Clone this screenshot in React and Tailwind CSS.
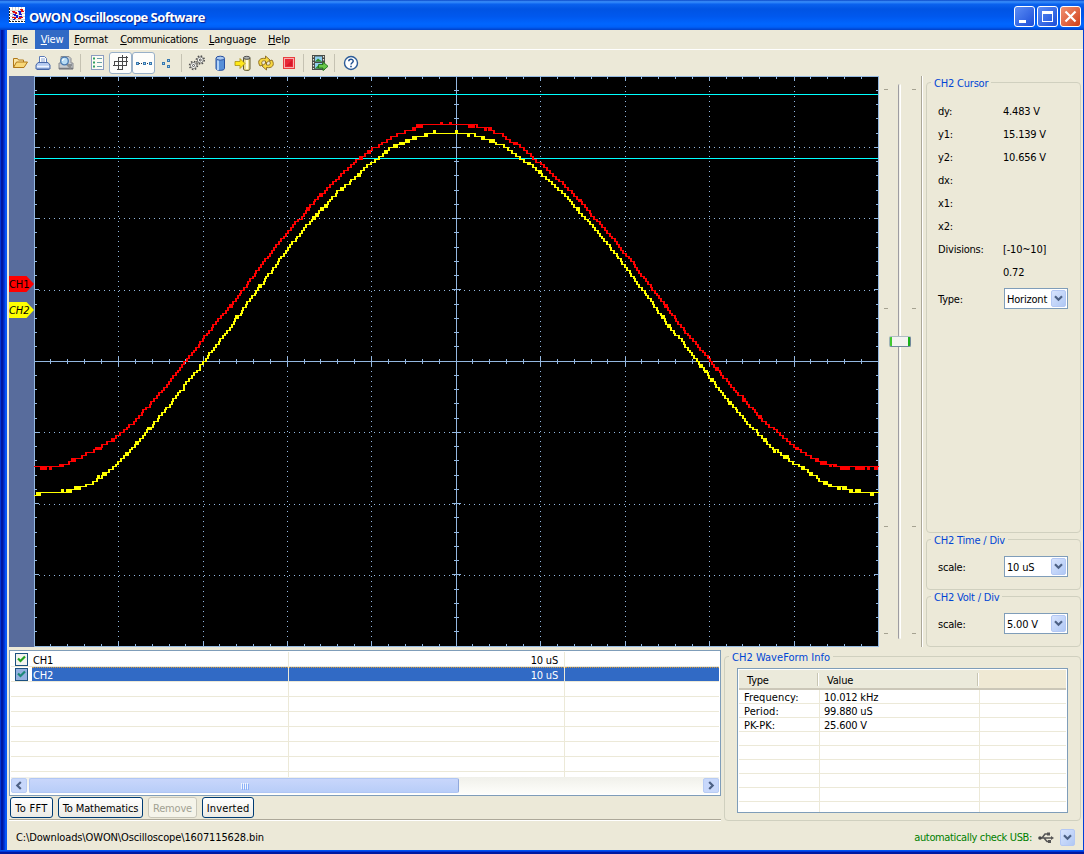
import React, { useState } from "react";
import clsx from "clsx";

const X0 = 34;
const Y0 = 76;
const STEP = 2.85; // one ADC level on screen
const COLS = [118, 203, 287, 371, 456, 540, 625, 709, 794];
const ROWS = [147, 218, 290, 361, 432, 504, 575];

const CH1 = [
  [34, 467.5], [50, 467.5], [56, 466], [66, 463], [78, 457], [90, 452], [100, 446], [110, 440],
  [118, 434], [135, 419], [155, 397], [186, 359], [203, 337], [235, 298], [262, 262], [287, 231],
  [310, 205], [330, 184], [355, 160], [371, 149], [380, 143], [390, 137], [405, 131], [418, 126],
  [440, 124], [460, 124], [475, 126], [490, 130], [503, 136], [521, 147], [533, 158], [545, 168],
  [560, 182], [570, 191], [600, 225], [625, 254], [660, 300], [676, 321], [709, 361], [720, 374],
  [743, 400], [760, 418], [777, 432], [794, 447], [806, 455], [818, 461], [835, 465.5], [842, 467.5],
  [878, 467.5],
];

const CH2 = [
  [34, 493], [50, 493], [66, 491], [78, 487], [90, 482.5], [100, 476], [110, 469], [118, 462],
  [128, 451], [138, 440], [170, 402], [203, 361], [230, 325], [260, 284], [287, 248], [310, 220],
  [340, 189], [371, 162], [378, 157], [392, 146], [403, 142], [418, 136], [430, 133], [445, 132.5],
  [460, 133], [475, 135], [490, 140], [503, 147], [521, 158], [533, 167], [543, 176], [555, 187],
  [566, 197], [600, 236], [625, 267], [649, 300], [667, 325], [697, 361], [709, 377], [718, 389],
  [727, 400], [748, 425], [760, 436], [773, 449], [794, 463], [808, 472], [820, 480], [831, 486],
  [850, 490], [860, 492], [878, 493],
];

// stepped trace, noise makes it flip between neighbouring levels
function tracePath(points, seed, spread) {
  let s = seed;
  const rand = () => {
    s = (s * 16807) % 2147483647;
    return s / 2147483647;
  };
  let i = 0;
  let d = "";
  let prev = null;
  for (let x = 34; x <= 877; x++) {
    while (i < points.length - 2 && x > points[i + 1][0]) i++;
    const [ax, ay] = points[i];
    const [bx, by] = points[i + 1];
    const y = ay + ((by - ay) * (x - ax)) / (bx - ax);
    const noise = (rand() + rand() - 1) * spread;
    const level = Math.round(Math.round((y - Y0) / STEP + noise) * STEP);
    d += prev === null ? `M${x - X0} ${level + 0.5}` : `H${x - X0 + 0.5}V${level + 0.5}`;
    prev = level;
  }
  return d + "h1";
}

function gridPath() {
  let d = "";
  for (let k = 1; k < 50; k++) {
    const x = k % 5 === 0 ? COLS[k / 5 - 1] - X0 : Math.floor(16.88 * k);
    const n = k % 5 === 0 ? 5 : 3;
    const c = k % 5 === 0 ? 5 : 2;
    d += `M${x} 0h1v${n}h-1zM${x} ${571 - n}h1v${n}h-1zM${x} ${285 - c}h1v${c * 2 + 1}h-1z`;
  }
  for (let k = 1; k < 40; k++) {
    const y = Math.floor(14.25 * k);
    const n = k % 5 === 0 ? 5 : 3;
    const c = k % 5 === 0 ? 4 : 2;
    d += `M0 ${y}h${n}v1h-${n}zM${845 - n} ${y}h${n}v1h-${n}zM${422 - c} ${y}h${c * 2 + 1}v1h-${c * 2 + 1}z`;
  }
  COLS.forEach((x) => {
    for (let y = 10; y < 568; y += 5) d += `M${x - X0} ${y}h1v1h-1z`;
  });
  ROWS.forEach((y) => {
    for (let x = 5; x < 842; x += 5) d += `M${x} ${y - Y0}h1v1h-1z`;
  });
  return d;
}

function Trace({ points, seed, spread, color }) {
  const d = tracePath(points, seed, spread);
  return (
    <g fill="none" stroke={color}>
      <path d={d} />
      <path d={d} transform="translate(1 0)" />
    </g>
  );
}

function Scope() {
  return (
    <svg className="block shrink-0" width="845" height="571" shapeRendering="crispEdges">
      <rect width="845" height="571" fill="#000" />
      <path d={gridPath()} fill="#94b8e0" />
      <path d="M0.5 0V571M844.5 0V571M0 0.5H845M0 570.5H845M422.5 0V571M0 285.5H845" stroke="#94b8e0" />
      <path d="M0 18.5H844M0 82.5H844" stroke="#00ffff" />
      <Trace points={CH1} seed={7717} spread={0.58} color="#ff0000" />
      <Trace points={CH2} seed={91234} spread={0.72} color="#ffff00" />
    </svg>
  );
}

function AppIcon() {
  return (
    <svg width="16" height="16" shapeRendering="crispEdges">
      <rect width="16" height="16" fill="#fff" />
      <path d="M3.5 0v14M6.5 0v14M9.5 0v14M12.5 0v14M1 3.5h15M1 6.5h15M1 9.5h15M1 12.5h15" stroke="#d4d4d4" />
      <path d="M.5 1v15M0 14.5h16" fill="none" stroke="#222" strokeDasharray="2 1" />
      <path d="M3 4.500h2v1h2v1M11 2.500h2v2h2M3 10.500h3v1M9 11.500h2v-1h3" fill="none" stroke="#e01010" strokeWidth="1.500" />
      <path d="M4 7.500h2v1h2v2M9 4.500h2v3h2M4 12.500h2M10 9.500h3" fill="none" stroke="#1818d0" strokeWidth="1.500" />
    </svg>
  );
}

const icons = {
  open: (
    <>
      <path d="M1.5 12.5v-9h4l1 1.5h5v2" fill="#fbe6a4" stroke="#b07818" />
      <path d="M1.5 12.5L4.5 7h11l-3.5 5.5z" fill="#f8d878" stroke="#b07818" />
    </>
  ),
  print: (
    <>
      <path d="M4.5 7V1.5h5l2 2V7" fill="#fff" stroke="#5b7bb8" />
      <path d="M6 4h4M6 6h4" stroke="#8aa4d0" />
      <path d="M3 7.5h10l2 2.5v4H1v-4z" fill="#b4caf0" stroke="#4868a8" />
      <path d="M2 11.5h12" stroke="#eef4ff" strokeWidth="1.5" />
      <path d="M2 14.5h12" stroke="#4868a8" />
    </>
  ),
  preview: (
    <>
      <path d="M3 1.5h8l2 2V8h2v6H1V8h2z" fill="#c8ccd0" stroke="#8a8c90" />
      <path d="M1 13.5h14M10 10h4" stroke="#77797d" strokeWidth="1.5" />
      <path d="M8 8l5 5" stroke="#909090" strokeWidth="2.5" />
      <circle cx="6.5" cy="6" r="3.8" fill="#b8dcf4" stroke="#4878b0" strokeWidth="1.3" />
      <path d="M4.5 6a2 2 0 012-2" fill="none" stroke="#fff" strokeWidth="1.2" />
    </>
  ),
  list: (
    <>
      <rect x="1.500" y=".5" width="12" height="14" fill="#fcfcf4" stroke="#8c9cc0" />
      <path d="M3 2.500h2v2h-2zM3 6.500h2v2h-2zM3 10.500h2v2h-2z" fill="#30a060" />
      <path d="M7 3.500h5M7 7.500h5M7 11.500h5" stroke="#68a0a8" />
    </>
  ),
  grid: (
    <path
      d="M5.500 2v13M9.500 0v15M13.500 1v10M1.500 6v5M5 2.500h10M1 6.500h14M0 10.500h14M4 14.500h6"
      fill="none"
      stroke="#484848"
      shapeRendering="crispEdges"
    />
  ),
  dots: (
    <g shapeRendering="crispEdges">
      <path d="M1 8.500h15" stroke="#303840" strokeDasharray="1 1" />
      <path d="M0 7h3v3H0zM7 7h3v3H7zM13 7h3v3h-3z" fill="#3878b0" />
      <path d="M1 8h1v1H1zM8 8h1v1H8zM14 8h1v1h-1z" fill="#a0d4f0" />
    </g>
  ),
  points: (
    <g shapeRendering="crispEdges">
      <path d="M3 7h3v3H3zM8 4h3v3H8zM8 10h3v3H8z" fill="#3878b0" />
      <path d="M4 8h1v1H4zM9 5h1v1H9zM9 11h1v1H9z" fill="#a0d4f0" />
    </g>
  ),
  gears: (
    <>
      <circle cx="4.500" cy="10.500" r="3.900" fill="none" stroke="#505050" strokeWidth="1.600" strokeDasharray="1.500 1.560" />
      <circle cx="4.500" cy="10.500" r="3" fill="#f8f8f4" stroke="#606060" strokeWidth=".8" />
      <circle cx="4.500" cy="10.500" r="1" fill="#fff" stroke="#505050" />
      <circle cx="11.300" cy="5" r="3.900" fill="none" stroke="#505050" strokeWidth="1.600" strokeDasharray="1.500 1.560" />
      <circle cx="11.300" cy="5" r="3" fill="#f8f8f4" stroke="#606060" strokeWidth=".8" />
      <circle cx="11.300" cy="5" r="1" fill="#fff" stroke="#505050" />
    </>
  ),
  cylinder: (
    <>
      <path d="M4 3.500v10c0 2.500 8.500 2.500 8.500 0v-10z" fill="#5890d8" stroke="#2850a0" />
      <path d="M6 5v10" stroke="#b4d4f8" strokeWidth="2" />
      <ellipse cx="8.250" cy="3.200" rx="4.250" ry="2" fill="#a8c8f0" stroke="#2850a0" />
    </>
  ),
  load: (
    <>
      <path d="M8.500 3v11c0 2 6.500 2 6.500 0V3z" fill="#e8dc90" stroke="#605830" />
      <path d="M12 5v9" stroke="#fffbe0" strokeWidth="2" />
      <ellipse cx="11.750" cy="2.800" rx="3.250" ry="1.500" fill="#b0b4b0" stroke="#505050" />
      <path d="M0 6.500h5V3.500l5 5-5 5v-3H0z" fill="#ffe818" stroke="#a89010" strokeWidth=".8" />
    </>
  ),
  refresh: (
    <>
      <path d="M2 11C-1.500 5.500 2.500 2.500 7.500 3.500V1L12 5 7.500 8.500V6C4 5.300 2.800 7 4.500 10z" fill="#f8d840" stroke="#8a6818" strokeWidth=".9" />
      <path d="M14 5C17.500 10.500 13.500 13.500 8.500 12.500V15L4 11l4.500-3.500V10c3.500.7 4.700-1 3-4z" fill="#f8d840" stroke="#8a6818" strokeWidth=".9" />
    </>
  ),
  stop: (
    <>
      <rect x="2.500" y="2.500" width="11" height="11" fill="#f8b0b0" stroke="#e84040" />
      <rect x="4" y="4" width="8" height="8" fill="#e82838" />
      <path d="M5 11L11 5v6z" fill="#d81828" />
    </>
  ),
  film: (
    <>
      <rect x="0" y="0" width="13" height="15" fill="#484c48" />
      <path d="M1.500 1v13M11.500 1v13" stroke="#e8e8e0" strokeWidth="1.200" strokeDasharray="1.500 1.500" />
      <path d="M3 1.500h7v5H3z" fill="#90d0f0" />
      <path d="M3 8h7v5.500H3z" fill="#90d0f0" />
      <path d="M3 6.500l3-3 4 3zM3 13.500l3-3 4 3z" fill="#309030" />
      <path d="M6.500 9.500H11v-2.500l5 4.300-5 4.300V13H6.500z" fill="#68c848" stroke="#207018" strokeWidth=".9" />
    </>
  ),
  help: (
    <>
      <circle cx="8" cy="8" r="6.500" fill="#fff" stroke="#2c5c98" strokeWidth="1.400" />
      <path d="M5.800 6.300C5.800 3.600 10.300 3.700 10.200 6.200 10.100 7.700 8 7.800 8 9.600" fill="none" stroke="#205090" strokeWidth="1.500" />
      <path d="M7.200 10.800h1.600v1.500H7.200z" fill="#205090" />
    </>
  ),
};

function Tool({ name, active }) {
  return (
    <button
      className={clsx(
        "flex h-[22px] w-[23px] shrink-0 items-center justify-center",
        active && "rounded-[3px] border border-[#98b0c8] bg-[#fdfdfb]"
      )}
    >
      <svg width="16" height="16" viewBox="0 0 16 16" className="shrink-0 overflow-visible">
        {icons[name]}
      </svg>
    </button>
  );
}

function Divider({ className }) {
  return <div className={clsx("h-[18px] w-px shrink-0 bg-[#c5c2b2]", className)} />;
}

function Chevron({ className }) {
  return (
    <svg width="9" height="7" viewBox="0 0 9 7" className={className}>
      <path d="M1 1.200L4.500 4.700 8 1.200" fill="none" stroke="#4d6185" strokeWidth="2.200" />
    </svg>
  );
}

function DropButton({ className }) {
  return (
    <span
      className={clsx(
        "flex h-[17px] w-[15px] items-center justify-center rounded-[2px] border border-[#b4c8f4] bg-linear-to-br from-[#d8e4fe] to-[#b0c8f4]",
        className
      )}
    >
      <Chevron />
    </span>
  );
}

function Combo({ value }) {
  return (
    <div className="mb-[2px] ml-px flex h-[21px] w-[64px] items-center justify-between border border-[#7f9db9] bg-white pr-px pl-[2px]">
      <span className="pt-px">{value}</span>
      <DropButton />
    </div>
  );
}

function Group({ title, className, titleClass, children }) {
  return (
    <section className={clsx("rounded-[4px] border border-[#d0d0bf]", className)}>
      <h2 className={clsx("-mt-[6px] ml-[4px] w-fit bg-[#ece9d8] px-[3px] text-[#0046d5]", titleClass)}>{title}</h2>
      {children}
    </section>
  );
}

function Marker({ label, className }) {
  return (
    <div
      className={clsx(
        "flex h-4 w-[25px] items-center text-[11px] tracking-[-0.1px] [clip-path:polygon(0_0,70%_0,100%_50%,70%_100%,0_100%)]",
        className
      )}
    >
      {label}
    </div>
  );
}

function Slider() {
  return (
    <div className="flex h-[571px] w-[44px] shrink-0 justify-between border-r border-white">
      <div className="relative flex w-[42px] justify-center pt-2">
        <div className="ml-[-1px] h-[555px] w-[3px] rounded-full border-r border-l border-r-white border-l-[#9d9ca1] bg-[#f2f1ea]" />
        {[13, 232, 450, 557].map((y) => (
          <div key={y} className="absolute left-[5px] flex w-[32px] justify-between" style={{ top: y }}>
            <span className="h-px w-[4px] bg-[#a5a291]" />
            <span className="h-px w-[4px] bg-[#a5a291]" />
          </div>
        ))}
        <div className="absolute top-[260px] left-[10px] h-[11px] w-[22px] rounded-[2px] border border-t-[#b0bcc4] border-r-[#70889c] border-b-[#70889c] border-l-[#a0b4b8] bg-linear-to-r from-[#40c830] from-10% via-[#f3f3ef] via-10% to-[#f3f3ef] to-88%">
          <div className="ml-auto h-full w-[2px] bg-[#18b018]" />
        </div>
      </div>
      <div className="w-px bg-[#aca899]" />
    </div>
  );
}

function Check({ on, selected }) {
  return (
    <span
      className={clsx(
        "flex size-[13px] items-center justify-center border",
        selected ? "border-[#1c5180] bg-[#94b0e0]" : "border-[#1c5180] bg-[#f3f3ef]"
      )}
    >
      {on && (
        <svg width="9" height="9" viewBox="0 0 9 9">
          <path d="M1 3.500L3.500 6 8 1.500" fill="none" stroke={selected ? "#1c8878" : "#21a121"} strokeWidth="2.200" />
        </svg>
      )}
    </span>
  );
}

function ChannelTable() {
  const [selected, setSelected] = useState("CH2");
  const rows = [
    { name: "CH1", scale: "10 uS" },
    { name: "CH2", scale: "10 uS" },
    ...Array(6).fill({}),
  ];
  return (
    <div className="h-[146px] w-[712px] border border-[#7f9db9] bg-white px-px pt-px">
      <div className="h-[125px] overflow-hidden">
        {rows.map((row, i) => {
          const active = row.name && row.name === selected;
          const cell = active
            ? "border-t border-dotted border-[#d09840] bg-[#316ac5] leading-[16px]"
            : "leading-[18px]";
          return (
            <div
              key={i}
              onClick={() => row.name && setSelected(row.name)}
              className={clsx("flex h-[15px] border-b border-[#ece9d8]", active && "text-white")}
            >
              <div className="flex w-[21px] items-center pl-1">
                {row.name && <Check on selected={active} />}
              </div>
              <div className={clsx("flex h-[14px] w-[256px] pl-px", cell)}>{row.name}</div>
              <div className="w-px bg-[#ece9d8]" />
              <div className={clsx("flex h-[14px] w-[275px] justify-end pr-[6px]", cell)}>{row.scale}</div>
              <div className="w-px bg-[#ece9d8]" />
              <div className={clsx("h-[14px] flex-1", cell)} />
            </div>
          );
        })}
        <div className="flex h-[5px]">
          <div className="ml-[277px] w-px bg-[#ece9d8]" />
          <div className="ml-[275px] w-px bg-[#ece9d8]" />
        </div>
      </div>
      <div className="flex h-[17px] items-center justify-between bg-linear-to-b from-[#f0f0ea] to-[#fefefb]">
        <div className="flex items-center gap-[2px]">
          <span className="flex h-[15px] w-[16px] items-center justify-center rounded-[2px] border border-[#b8ccf4] bg-[#c8d8fb] pr-[2px]">
            <Chevron className="shrink-0 rotate-90" />
          </span>
          <div className="flex h-[15px] w-[430px] items-center justify-center gap-px rounded-[2px] border border-[#b0c6f4] border-r-[#90a8dc] bg-linear-to-b from-[#c8d6fb] to-[#b8cdf8]">
            {[0, 1, 2, 3].map((n) => (
              <span key={n} className="h-[6px] w-px bg-[#eef4fe] shadow-[1px_1px_0_#8cb0f8]" />
            ))}
          </div>
        </div>
        <span className="flex h-[15px] w-[16px] items-center justify-center rounded-[2px] border border-[#b8ccf4] bg-[#c8d8fb]">
          <Chevron className="-rotate-90" />
        </span>
      </div>
    </div>
  );
}

function XpButton({ className, disabled, children }) {
  return (
    <button
      disabled={disabled}
      className={clsx(
        "h-[21px] rounded-[3px] border pt-px text-center whitespace-nowrap",
        disabled
          ? "border-[#c9c7ba] bg-[#f5f4ea] text-[#a1a192]"
          : "border-[#003c74] bg-linear-to-b from-white to-[#ecebe5]",
        className
      )}
    >
      {children}
    </button>
  );
}

function WaveInfo() {
  const rows = [
    ["Frequency:", "10.012 kHz"],
    ["Period:", "99.880 uS"],
    ["PK-PK:", "25.600 V"],
    ...Array(6).fill(["", ""]),
  ];
  return (
    <div className="mt-[4px] ml-[12px] h-[145px] w-[331px] overflow-hidden border border-[#7f9db9] bg-white p-px">
      <div className="flex h-[20px] items-center border-b-2 border-[#cbc7b8] bg-[#ebeadb]">
        <div className="w-[78px] pt-[3px] pl-[8px]">Type</div>
        <div className="h-[13px] w-[2px] border-l border-[#c7c5b2] bg-white" />
        <div className="w-[158px] pt-[3px] pl-[8px]">Value</div>
        <div className="h-[13px] w-[2px] border-l border-[#c7c5b2] bg-white" />
        <div className="h-full flex-1 bg-[#efe9d4]" />
      </div>
      {rows.map(([type, value], i) => (
        <div key={i} className="flex h-[14px] items-center border-b border-[#ece9d8] leading-[15px]">
          <div className="h-full w-[80px] pl-[5px] tracking-[0.1px]">{type}</div>
          <div className="h-full w-px bg-[#ece9d8]" />
          <div className="h-full w-[159px] pl-[4px]">{value}</div>
          <div className="h-full w-px bg-[#ece9d8]" />
        </div>
      ))}
    </div>
  );
}

function TitleBar() {
  const btn = "flex size-[21px] items-center justify-center rounded-[3px] border border-white";
  return (
    <header className="flex h-[30px] shrink-0 items-center bg-[linear-gradient(180deg,#0a48c8_0,#3a90fc_6%,#0a62ee_14%,#0054e3_30%,#0058ee_55%,#0066ff_80%,#0060f8_90%,#0040c8_100%)] pt-[3px] pr-[3px] pl-[9px]">
      <div className="-mt-[3px]">
        <AppIcon />
      </div>
      <h1 className="ml-[4px] flex-1 pt-[2px] font-['Open_Sans','Noto_Sans',sans-serif] text-[13px] font-bold tracking-[-0.53px] text-white [font-stretch:normal] [text-shadow:1px_1px_1px_#0a1883]">
        OWON Oscilloscope Software
      </h1>
      <div className="flex gap-[2px]">
        <button className={clsx(btn, "bg-linear-to-br from-[#5c8cf4] to-[#1c4cd8]")}>
          <span className="mt-[9px] mr-[4px] h-[3px] w-[7px] bg-white" />
        </button>
        <button className={clsx(btn, "bg-linear-to-br from-[#5c8cf4] to-[#1c4cd8]")}>
          <span className="h-[11px] w-[11px] border border-t-[3px] border-white" />
        </button>
        <button className={clsx(btn, "bg-linear-to-br from-[#f09070] to-[#d03c10]")}>
          <svg width="13" height="13">
            <path d="M1.500 1.500L11.500 11.500M11.500 1.500L1.500 11.500" stroke="#fff" strokeWidth="2.200" />
          </svg>
        </button>
      </div>
    </header>
  );
}

const menu = [
  ["File", "w-[28px] pr-[2px]"],
  ["View", "w-[34px] bg-[#316ac5] text-white"],
  ["Format", "w-[46px] pr-[2px]"],
  ["Communications", "w-[88px] tracking-[-0.4px]"],
  ["Language", "w-[60px] pr-px"],
  ["Help", "w-[33px] pr-px"],
];

function CursorRow({ label, value }) {
  return (
    <div className="flex h-[23px] items-center">
      <span className="w-[65px]">{label}</span>
      <span>{value}</span>
    </div>
  );
}

export default function App() {
  return (
    <div className="flex h-[854px] w-[1084px] flex-col overflow-hidden bg-[#ece9d8] font-['DejaVu_Sans_Condensed','DejaVu_Sans',sans-serif] text-[11px] leading-[13px] tracking-[-0.2px] text-black [font-stretch:condensed]">
      <TitleBar />
      <div className="flex h-[820px] shrink-0">
        <div className="w-[7px] shrink-0 bg-[linear-gradient(90deg,#0036d8_0_1px,#0018a0_1px_3px,#0028c0_3px_4px,#0038dc_4px_5px,#0858f4_5px_7px)]" />
        <main className="flex w-[1076px] shrink-0 flex-col">
          <nav className="flex h-[20px] border-b border-white">
            {menu.map(([name, cls]) => (
              <button key={name} className={clsx("h-[19px] text-center whitespace-nowrap", cls)}>
                <span className="underline underline-offset-1">{name[0]}</span>
                {name.slice(1)}
              </button>
            ))}
          </nav>

          <div className="flex h-[26px] items-center pl-px">
            <Tool name="open" />
            <Tool name="print" />
            <Tool name="preview" />
            <Divider className="mr-[5px] ml-[3px]" />
            <Tool name="list" />
            <Tool name="grid" active />
            <Tool name="dots" active />
            <Tool name="points" />
            <Divider className="mr-[3px] ml-[3px]" />
            <Tool name="gears" />
            <Tool name="cylinder" />
            <Tool name="load" />
            <Tool name="refresh" />
            <Tool name="stop" />
            <Divider className="mr-[4px] ml-[3px]" />
            <Tool name="film" />
            <Divider className="mr-[4px] ml-[3px]" />
            <Tool name="help" />
          </div>

          <div className="flex h-[571px] pl-[2px]">
            <div className="flex w-[25px] flex-col gap-[10px] bg-[#586c9c] pt-[200px]">
              <Marker label="CH1" className="bg-[#ff0000]" />
              <Marker label="CH2" className="bg-[#ffff00] italic" />
            </div>
            <Scope />
            <Slider />
            <div className="ml-[3px] flex w-[155px] shrink-0 flex-col pt-[6px]">
              <Group title="CH2 Cursor" className="h-[451px]">
                <div className="pt-[10px] pl-[11px]">
                  <CursorRow label="dy:" value="4.483 V" />
                  <CursorRow label="y1:" value="15.139 V" />
                  <CursorRow label="y2:" value="10.656 V" />
                  <CursorRow label="dx:" />
                  <CursorRow label="x1:" />
                  <CursorRow label="x2:" />
                  <CursorRow label="Divisions:" value="[-10~10]" />
                  <CursorRow value="0.72" />
                  <div className="mt-[4px]">
                    <CursorRow label="Type:" value={<Combo value="Horizont" />} />
                  </div>
                </div>
              </Group>
              <Group title="CH2 Time / Div" className="mt-[6px] h-[51px]">
                <div className="pt-[9px] pl-[11px]">
                  <CursorRow label="scale:" value={<Combo value="10 uS" />} />
                </div>
              </Group>
              <Group title="CH2 Volt / Div" className="mt-[6px] h-[51px]">
                <div className="pt-[9px] pl-[11px]">
                  <CursorRow label="scale:" value={<Combo value="5.00 V" />} />
                </div>
              </Group>
            </div>
          </div>

          <div className="flex h-[174px] pl-[2px]">
            <div className="w-[712px] shrink-0 pt-[3px]">
              <ChannelTable />
              <div className="flex h-[24px] gap-[5px] border-b border-[#aca899] pt-px pl-px shadow-[0_1px_0_#fff]">
                <XpButton className="w-[43px] tracking-[0.3px]">To FFT</XpButton>
                <XpButton className="w-[85px] tracking-[-0.1px]">To Mathematics</XpButton>
                <XpButton className="w-[49px]" disabled>Remove</XpButton>
                <XpButton className="w-[52px] tracking-[0.15px]">Inverted</XpButton>
              </div>
            </div>
            <Group
              title="CH2 WaveForm Info"
              titleClass="tracking-[0.03px]"
              className="mt-[9px] ml-[3px] h-[165px] w-[357px]"
            >
              <WaveInfo />
            </Group>
          </div>

          <footer className="flex h-[29px] items-center pt-[3px] pr-[8px] pl-[9px]">
            <span className="flex-1 tracking-[-0.13px]">C:\Downloads\OWON\Oscilloscope\1607115628.bin</span>
            <span className="tracking-[-0.36px] text-[#008000]">automatically check USB:</span>
            <svg width="16" height="11" viewBox="0 0 16 11" className="mr-[6px] ml-[6px]">
              <path d="M1 6h13M4 6l3-4h3M6 6l3 3.500h2" fill="none" stroke="#555" strokeWidth="1.500" />
              <circle cx="2" cy="6" r="1.800" fill="#444" />
              <path d="M13 4l3 2-3 2zM9 .5h3v3H9zM10 8h3v3h-3z" fill="#555" />
            </svg>
            <DropButton />
          </footer>
        </main>
        <div className="w-px bg-[#0040d8]" />
      </div>
      <div className="h-[4px] shrink-0 bg-[linear-gradient(180deg,#0054f0_0_1px,#0038dc_1px_2px,#0018a0_2px_4px)]" />
    </div>
  );
}
